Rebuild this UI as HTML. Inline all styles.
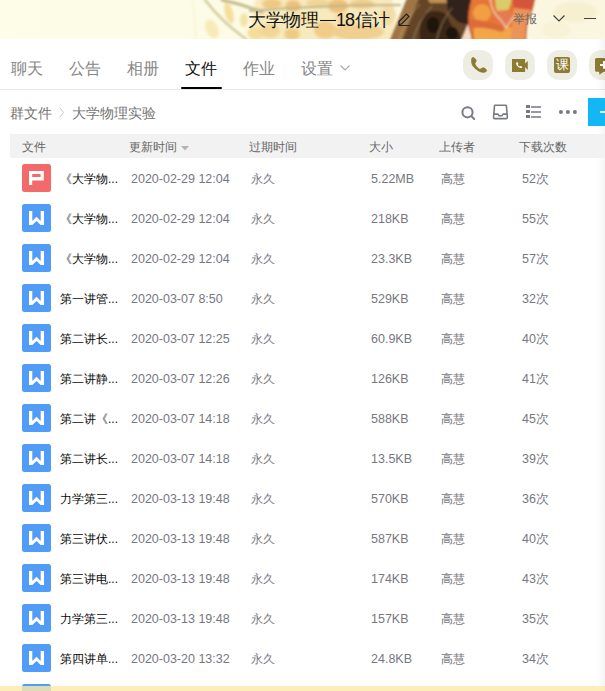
<!DOCTYPE html>
<html><head><meta charset="utf-8">
<style>
*{margin:0;padding:0;box-sizing:border-box}
html,body{width:605px;height:691px;overflow:hidden;background:#fff}
body{position:relative;font-family:"Liberation Sans",sans-serif;color:#333}
.a{position:absolute;white-space:nowrap}
#hdr{position:absolute;left:0;top:0;width:605px;height:39px;background:#fdfce8;overflow:hidden}
.tab{position:absolute;top:58px;font-size:16px;line-height:22px;color:#878787}
.tab.on{color:#111}
.rb{position:absolute;top:50px;width:30px;height:30px;border-radius:12px;background:#eeede3}
.th{position:absolute;top:134px;left:10px;width:595px;height:24px;background:#f2f2f2}
.thc{position:absolute;top:140px;font-size:12px;line-height:14px;color:#666}
.row{position:absolute;left:0;width:605px;height:40px}
.ic{position:absolute;left:22px;top:4px;width:29px;height:28px;border-radius:2.5px}
.ic.w{background:#519cf6}
.ic.p{background:#f26a6a}
.ic svg{position:absolute;left:0;top:0}
.nm{position:absolute;left:60px;top:10px;font-size:12px;line-height:18px;color:#0a0a0a}
.c{position:absolute;top:10px;font-size:12.5px;line-height:18px;color:#77777f}
.d{left:131px}.e{left:251px;font-size:12px}.s{left:371px}.u{left:441px;font-size:12px}.n{left:522px}
</style></head><body>
<div id="hdr">
<svg width="605" height="39" viewBox="0 0 605 39" style="position:absolute;left:0;top:0">
<defs>
<filter id="b1" x="-20%" y="-50%" width="140%" height="200%"><feGaussianBlur stdDeviation="1.6"/></filter>
<filter id="b2" x="-20%" y="-50%" width="140%" height="200%"><feGaussianBlur stdDeviation="0.8"/></filter>
<linearGradient id="fl" x1="0" y1="0" x2="0" y2="1"><stop offset="0" stop-color="#e9783a"/><stop offset="0.6" stop-color="#f0903e"/><stop offset="1" stop-color="#f5b050"/></linearGradient>
</defs>
<defs><linearGradient id="bgg" x1="0" y1="0" x2="1" y2="0"><stop offset="0" stop-color="#fdfde8"/><stop offset="0.3" stop-color="#fdfce6"/><stop offset="0.85" stop-color="#fbf6e0"/><stop offset="1" stop-color="#fbf6e0"/></linearGradient></defs><rect width="605" height="39" fill="url(#bgg)"/>
<g filter="url(#b1)">
<path d="M256 -5 L392 -5 L397 44 L249 44Z" fill="#f6e4b0" opacity="0.75"/>
<ellipse cx="229" cy="13" rx="4" ry="11" fill="#f4de98" transform="rotate(-15 229 13)"/>
<ellipse cx="244" cy="20" rx="4" ry="7" fill="#f5e2a4"/>
<ellipse cx="212" cy="29" rx="6" ry="10" fill="#f8eab8" transform="rotate(-25 212 29)"/>
<ellipse cx="256" cy="33" rx="9" ry="6" fill="#f4dc9a"/>
<ellipse cx="272" cy="4" rx="10" ry="5" fill="#efc884"/>
<ellipse cx="293" cy="6" rx="8" ry="6" fill="#eec27c"/>
<ellipse cx="318" cy="3" rx="12" ry="4" fill="#f2d494"/>
<ellipse cx="270" cy="31" rx="10" ry="7" fill="#f3d596"/>
<ellipse cx="292" cy="34" rx="8" ry="6" fill="#efca84"/>
<ellipse cx="325" cy="30" rx="11" ry="9" fill="#f0cc88"/>
<ellipse cx="338" cy="6" rx="10" ry="7" fill="#ecc07a"/>
<ellipse cx="362" cy="4" rx="12" ry="5" fill="#f0cc8a"/>
<ellipse cx="358" cy="32" rx="26" ry="8" fill="#f0cf90"/>
<ellipse cx="388" cy="15" rx="8" ry="10" fill="#f4dca6"/>
<ellipse cx="305" cy="18" rx="12" ry="5" fill="#f5e0a8"/>
<ellipse cx="345" cy="19" rx="10" ry="6" fill="#f4dba2"/>
<ellipse cx="575" cy="12" rx="22" ry="10" fill="#f6efd0"/><ellipse cx="556" cy="30" rx="14" ry="9" fill="#f8f2d6"/>
</g>
<g filter="url(#b2)" fill="none" stroke-linecap="round">
<path d="M205 0 Q222 22 246 39" stroke="#d2cb9c" stroke-width="2.4"/>
<path d="M222 0 Q242 4 262 12" stroke="#c4bb88" stroke-width="3"/>
<path d="M250 11 Q320 5 400 5" stroke="#c2b68a" stroke-width="2.2"/>
<path d="M193 0 L196 39" stroke="#f2efd0" stroke-width="1"/>
</g>
<g filter="url(#b2)">
<path d="M408 -4L472 -4L472 43L389 43Z" fill="#644428"/>
<path d="M408 -4L420 -4L401 43L389 43Z" fill="#a07444"/>
<path d="M426 -4L466 -4L460 3L430 3Z" fill="#c09050"/>
<path d="M446 -4L472 -4L472 26L458 22L448 12Z" fill="#30241a"/>
<path d="M424 14Q436 8 446 14L452 26Q460 30 462 43L420 43Q418 26 424 14Z" fill="#3a2818"/><ellipse cx="433" cy="25" rx="6" ry="8" fill="#1e140c"/><ellipse cx="452" cy="33" rx="6" ry="6" fill="#1a120c"/>
<g stroke="#dcc09a" stroke-width="0.8" fill="none" opacity="0.6"><path d="M398 43Q405 18 420 4"/><path d="M412 43Q418 20 432 6"/><path d="M436 43Q440 22 452 8"/></g>
<path d="M460 43L470 19L472 43Z" fill="#f6dcc4"/>
<path d="M472 -4L535 -4Q532 14 527 22Q525 30 526 43L474 43Q466 25 469 12Q470 5 472 -4Z" fill="#e67636"/>
<ellipse cx="482" cy="13" rx="9" ry="9" fill="#f0a042"/>
<path d="M474 28Q500 24 526 30L526 43L474 43Z" fill="#f2a646"/>
<path d="M470 19Q490 21 506 28L502 32Q486 27 471 27Z" fill="#dc6a3a"/>
<path d="M495 -4L512 -4Q511 6 508 10L497 11Q495 6 495 -4Z" fill="#dccb6a"/>
<path d="M492 11Q500 10 512 12Q514 20 506 27Q498 22 492 14Z" fill="#e57a52"/>
<path d="M512 -4L535 -4Q533 6 531 10L514 8Z" fill="#d4553a"/>
<path d="M514 8L531 10Q527 20 526 43L510 43Q512 25 514 8Z" fill="#ec9458"/>
<path d="M490 -4Q491 12 500 19Q505 25 506 28Q510 22 514 16" fill="none" stroke="#fff0d8" stroke-width="1"/>
<path d="M472 -4Q466 14 469 26Q471 33 474 43" fill="none" stroke="#9a3a22" stroke-width="0.9"/>
<path d="M535 -4Q532 14 527 22Q525 30 526 43" fill="none" stroke="#a8452a" stroke-width="0.8"/>
</g>
</svg>
<div class="a" style="left:248px;top:8px;font-size:18px;line-height:24px;color:#111;letter-spacing:-0.5px">大学物理</div><div class="a" style="left:320px;top:20px;width:15.5px;height:1.2px;background:#111"></div><div class="a" style="left:336px;top:8px;font-size:18px;line-height:24px;color:#111;letter-spacing:-0.9px">18</div><div class="a" style="left:355px;top:8px;font-size:18px;line-height:24px;color:#111;letter-spacing:-0.6px">信计</div>
<svg class="a" style="left:396px;top:11px" width="16" height="16" viewBox="0 0 16 16"><path d="M2.5 14.5 L13.5 14.5 M3 13.5 L3 10.5 L10.5 3 L13 5.5 L5.5 13 Z" fill="none" stroke="#222" stroke-width="1.2"/></svg>
<div class="a" style="left:513px;top:11px;font-size:12px;line-height:16px;color:#666">举报</div>
<svg class="a" style="left:552px;top:14px" width="14" height="9" viewBox="0 0 14 9"><path d="M1.5 1.5 L7 7 L12.5 1.5" fill="none" stroke="#444" stroke-width="1.2"/></svg>
<div class="a" style="left:584px;top:18px;width:12px;height:1px;background:#444"></div>
</div>

<div class="tab" style="left:11px">聊天</div>
<div class="tab" style="left:69px">公告</div>
<div class="tab" style="left:127px">相册</div>
<div class="tab on" style="left:185px">文件</div>
<div class="tab" style="left:243px">作业</div>
<div class="tab" style="left:301px">设置</div>
<svg class="a" style="left:339px;top:64px" width="12" height="8" viewBox="0 0 12 8"><path d="M1.5 1.5 L6 6 L10.5 1.5" fill="none" stroke="#aaa" stroke-width="1.1"/></svg>
<div class="a" style="left:181px;top:87px;width:41px;height:2px;background:#000;border-radius:1px"></div>
<div class="a" style="left:0;top:89px;width:605px;height:1px;background:#e9e9e9"></div>

<div class="rb" style="left:463px"><svg width="30" height="30" viewBox="0 0 30 30" style="position:absolute;left:0;top:0"><path d="M10.3 6.9 C11.5 7.5 13.5 9.5 13.7 10.7 L12.2 13.7 C13.3 16 15 18 16.8 18.9 L20.2 17.2 C21.8 17.8 23.5 19 24 20.6 C23.5 22.2 21.8 22.9 20.2 22.8 C17 22.6 13 20 10.5 17 C8.6 14.8 8 12.5 8.2 9.4 C8.4 8 9.3 7 10.3 6.9Z" fill="#8c7b30"/></svg></div>
<div class="rb" style="left:505px"><svg width="30" height="30" viewBox="0 0 30 30" style="position:absolute;left:0;top:0"><path d="M7 9 H20.1 V21.9 H7Z M20.1 13.5 L22.8 11.1 V19.9 L20.1 17.1Z" fill="#8c7b30"/><path d="M10.3 6.9 C11.5 7.5 13.5 9.5 13.7 10.7 L12.2 13.7 C13.3 16 15 18 16.8 18.9 L20.2 17.2 C21.8 17.8 23.5 19 24 20.6 C23.5 22.2 21.8 22.9 20.2 22.8 C17 22.6 13 20 10.5 17 C8.6 14.8 8 12.5 8.2 9.4 C8.4 8 9.3 7 10.3 6.9Z" fill="#fff" transform="translate(8.1 9.4) scale(0.38)"/></svg></div>
<div class="rb" style="left:547px"><div style="position:absolute;left:7px;top:6.5px;width:16px;height:16px;border-radius:2px;background:#8c7b30;color:#fff;font-size:13px;line-height:16px;text-align:center">课</div></div>
<div class="rb" style="left:589px"><svg width="30" height="30" viewBox="0 0 30 30" style="position:absolute;left:0;top:0"><path d="M7.5 8 H24 V21.7 H14.5 L10.5 24.8 L10 21.7 H7.5 Q6 21.7 6 20.2 V9.5 Q6 8 7.5 8Z" fill="#8c7b30"/><path d="M11 15.1 H19 M15 10.9 V18.7" stroke="#fff" stroke-width="2"/></svg></div>
<div class="a" style="left:597px;top:39px;width:8px;height:652px;background:linear-gradient(90deg,rgba(0,0,0,0),rgba(0,0,0,0.045))"></div>

<div class="a" style="left:10px;top:104px;font-size:14px;line-height:18px;color:#747474">群文件</div>
<div class="a" style="left:72px;top:104px;font-size:14px;line-height:18px;color:#747474">大学物理实验</div>
<div class="a" style="left:59px;top:107px;font-size:12px;color:#c0c4cc"><svg width="6" height="11" viewBox="0 0 6 11"><path d="M0.8 0.6 L4.6 5.5 L0.8 10.4" fill="none" stroke="#c4c8d0" stroke-width="1"/></svg></div>
<svg class="a" style="left:458px;top:103px" width="20" height="20" viewBox="0 0 20 20"><circle cx="9.5" cy="9.3" r="5.1" fill="none" stroke="#787b83" stroke-width="2"/><path d="M13.6 13.4 L16.2 16" stroke="#787b83" stroke-width="2" stroke-linecap="round"/></svg>
<svg class="a" style="left:490px;top:102px" width="20" height="20" viewBox="0 0 20 20"><path d="M5 3.2 H15.9 Q16.3 3.2 16.4 3.7 L17.4 15.6 Q17.4 16.6 16.5 16.6 H4.4 Q3.5 16.6 3.5 15.6 L4.5 3.7 Q4.6 3.2 5 3.2Z M3.9 12.1 H7.9 L9 13.7 H12 L13 12.1 H17" fill="none" stroke="#787b83" stroke-width="1.6" stroke-linejoin="round"/></svg>
<svg class="a" style="left:524px;top:103px" width="20" height="18" viewBox="0 0 20 18"><path d="M2 2h4v3H2zM2 7h4v3H2zM2 12h4v3H2z" fill="#75787f"/><path d="M7 4 H17 M7 9 H17 M7 14 H17" stroke="#75787f" stroke-width="1.7"/></svg>
<svg class="a" style="left:556px;top:108px" width="24" height="8" viewBox="0 0 24 8"><circle cx="4.9" cy="4" r="2" fill="#75787f"/><circle cx="11.9" cy="4" r="2" fill="#75787f"/><circle cx="18.9" cy="4" r="2" fill="#75787f"/></svg>
<div class="a" style="left:588px;top:98px;width:17px;height:28px;background:#12b7f5"><div style="position:absolute;left:12px;top:13px;width:10px;height:2px;background:#fff"></div></div>

<div class="th"></div>
<div class="thc" style="left:22px">文件</div>
<div class="thc" style="left:129px">更新时间</div>
<svg class="a" style="left:181px;top:146px" width="8" height="5" viewBox="0 0 8 5"><path d="M0 0 H8 L4 4.5Z" fill="#b4b4b4"/></svg>
<div class="thc" style="left:249px">过期时间</div>
<div class="thc" style="left:369px">大小</div>
<div class="thc" style="left:439px">上传者</div>
<div class="thc" style="left:519px">下载次数</div>

<!--ROWS--><div class="row" style="top:160px"><div class="ic p"><svg width="29" height="28" viewBox="0 0 29 28"><path d="M7 7H21.8V16.4H10.2V21H7ZM10.2 10.1V13H18.6V10.1Z" fill="#fff" fill-rule="evenodd"/></svg></div><div class="nm">《大学物...</div><div class="c d">2020-02-29 12:04</div><div class="c e">永久</div><div class="c s">5.22MB</div><div class="c u">高慧</div><div class="c n">52次</div></div>
<div class="row" style="top:200px"><div class="ic w"><svg width="29" height="28" viewBox="0 0 29 28"><path d="M7 7H10.3V17L14.5 12.7L18.7 17V7H22V21H18.7L14.5 17.1L10.3 21H7Z" fill="#fff"/></svg></div><div class="nm">《大学物...</div><div class="c d">2020-02-29 12:04</div><div class="c e">永久</div><div class="c s">218KB</div><div class="c u">高慧</div><div class="c n">55次</div></div>
<div class="row" style="top:240px"><div class="ic w"><svg width="29" height="28" viewBox="0 0 29 28"><path d="M7 7H10.3V17L14.5 12.7L18.7 17V7H22V21H18.7L14.5 17.1L10.3 21H7Z" fill="#fff"/></svg></div><div class="nm">《大学物...</div><div class="c d">2020-02-29 12:04</div><div class="c e">永久</div><div class="c s">23.3KB</div><div class="c u">高慧</div><div class="c n">57次</div></div>
<div class="row" style="top:280px"><div class="ic w"><svg width="29" height="28" viewBox="0 0 29 28"><path d="M7 7H10.3V17L14.5 12.7L18.7 17V7H22V21H18.7L14.5 17.1L10.3 21H7Z" fill="#fff"/></svg></div><div class="nm">第一讲管...</div><div class="c d">2020-03-07 8:50</div><div class="c e">永久</div><div class="c s">529KB</div><div class="c u">高慧</div><div class="c n">32次</div></div>
<div class="row" style="top:320px"><div class="ic w"><svg width="29" height="28" viewBox="0 0 29 28"><path d="M7 7H10.3V17L14.5 12.7L18.7 17V7H22V21H18.7L14.5 17.1L10.3 21H7Z" fill="#fff"/></svg></div><div class="nm">第二讲长...</div><div class="c d">2020-03-07 12:25</div><div class="c e">永久</div><div class="c s">60.9KB</div><div class="c u">高慧</div><div class="c n">40次</div></div>
<div class="row" style="top:360px"><div class="ic w"><svg width="29" height="28" viewBox="0 0 29 28"><path d="M7 7H10.3V17L14.5 12.7L18.7 17V7H22V21H18.7L14.5 17.1L10.3 21H7Z" fill="#fff"/></svg></div><div class="nm">第二讲静...</div><div class="c d">2020-03-07 12:26</div><div class="c e">永久</div><div class="c s">126KB</div><div class="c u">高慧</div><div class="c n">41次</div></div>
<div class="row" style="top:400px"><div class="ic w"><svg width="29" height="28" viewBox="0 0 29 28"><path d="M7 7H10.3V17L14.5 12.7L18.7 17V7H22V21H18.7L14.5 17.1L10.3 21H7Z" fill="#fff"/></svg></div><div class="nm">第二讲《...</div><div class="c d">2020-03-07 14:18</div><div class="c e">永久</div><div class="c s">588KB</div><div class="c u">高慧</div><div class="c n">45次</div></div>
<div class="row" style="top:440px"><div class="ic w"><svg width="29" height="28" viewBox="0 0 29 28"><path d="M7 7H10.3V17L14.5 12.7L18.7 17V7H22V21H18.7L14.5 17.1L10.3 21H7Z" fill="#fff"/></svg></div><div class="nm">第二讲长...</div><div class="c d">2020-03-07 14:18</div><div class="c e">永久</div><div class="c s">13.5KB</div><div class="c u">高慧</div><div class="c n">39次</div></div>
<div class="row" style="top:480px"><div class="ic w"><svg width="29" height="28" viewBox="0 0 29 28"><path d="M7 7H10.3V17L14.5 12.7L18.7 17V7H22V21H18.7L14.5 17.1L10.3 21H7Z" fill="#fff"/></svg></div><div class="nm">力学第三...</div><div class="c d">2020-03-13 19:48</div><div class="c e">永久</div><div class="c s">570KB</div><div class="c u">高慧</div><div class="c n">36次</div></div>
<div class="row" style="top:520px"><div class="ic w"><svg width="29" height="28" viewBox="0 0 29 28"><path d="M7 7H10.3V17L14.5 12.7L18.7 17V7H22V21H18.7L14.5 17.1L10.3 21H7Z" fill="#fff"/></svg></div><div class="nm">第三讲伏...</div><div class="c d">2020-03-13 19:48</div><div class="c e">永久</div><div class="c s">587KB</div><div class="c u">高慧</div><div class="c n">40次</div></div>
<div class="row" style="top:560px"><div class="ic w"><svg width="29" height="28" viewBox="0 0 29 28"><path d="M7 7H10.3V17L14.5 12.7L18.7 17V7H22V21H18.7L14.5 17.1L10.3 21H7Z" fill="#fff"/></svg></div><div class="nm">第三讲电...</div><div class="c d">2020-03-13 19:48</div><div class="c e">永久</div><div class="c s">174KB</div><div class="c u">高慧</div><div class="c n">43次</div></div>
<div class="row" style="top:600px"><div class="ic w"><svg width="29" height="28" viewBox="0 0 29 28"><path d="M7 7H10.3V17L14.5 12.7L18.7 17V7H22V21H18.7L14.5 17.1L10.3 21H7Z" fill="#fff"/></svg></div><div class="nm">力学第三...</div><div class="c d">2020-03-13 19:48</div><div class="c e">永久</div><div class="c s">157KB</div><div class="c u">高慧</div><div class="c n">35次</div></div>
<div class="row" style="top:640px"><div class="ic w"><svg width="29" height="28" viewBox="0 0 29 28"><path d="M7 7H10.3V17L14.5 12.7L18.7 17V7H22V21H18.7L14.5 17.1L10.3 21H7Z" fill="#fff"/></svg></div><div class="nm">第四讲单...</div><div class="c d">2020-03-20 13:32</div><div class="c e">永久</div><div class="c s">24.8KB</div><div class="c u">高慧</div><div class="c n">34次</div></div>
<div class="row" style="top:680px"><div class="ic w"><svg width="29" height="28" viewBox="0 0 29 28"><path d="M7 7H10.3V17L14.5 12.7L18.7 17V7H22V21H18.7L14.5 17.1L10.3 21H7Z" fill="#fff"/></svg></div></div><!--/ROWS-->
<div class="a" style="left:0;top:686px;width:605px;height:5px;background:rgba(252,234,168,0.82)"></div>
</body></html>
